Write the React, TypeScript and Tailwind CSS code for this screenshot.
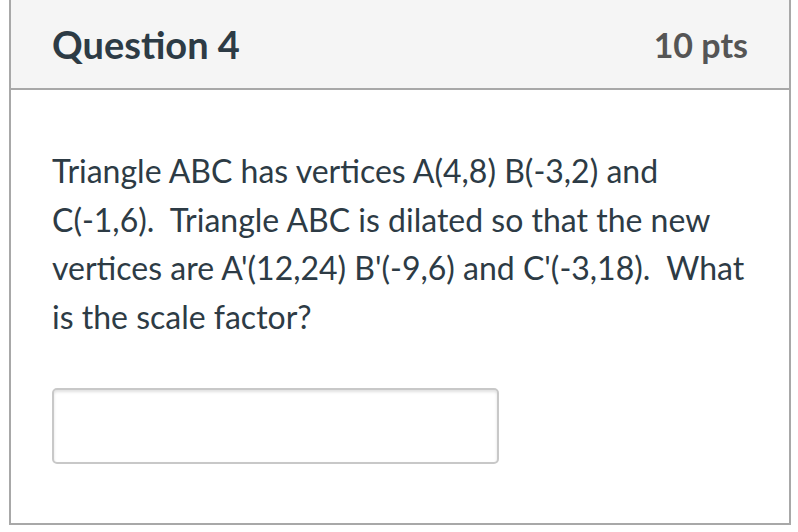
import React from "react";

export default function App() {
  return (
    <div className="w-[798px] h-[532px] bg-white relative overflow-hidden" style={{ fontFamily: "Lato, 'Noto Sans', sans-serif" }}>
      <div className="absolute left-[9px] top-[-4px] w-[782px] h-[529px] border-2 border-[#a8a8a8] flex flex-col">
        <div className="h-[92px] bg-[#f5f5f5] border-b-2 border-[#a8a8a8] flex items-center justify-between pl-[41px] pr-[41px] pt-[2px]">
          <div className="text-[38px] font-bold text-[#2d3b45]">Question 4</div>
          <div className="text-[34px] font-bold text-[#555555]">10 pts</div>
        </div>
        <div className="flex-1 bg-white pl-[41px] pt-[57px]">
          <p className="text-[32px] leading-[48.5px] text-[#2d3b45] whitespace-pre">
            {"Triangle ABC has vertices A(4,8) B(-3,2) and\nC(-1,6).  Triangle ABC is dilated so that the new\nvertices are A'(12,24) B'(-9,6) and C'(-3,18).  What\nis the scale factor?"}
          </p>
          <div className="mt-[47px] w-[447px] h-[76px] rounded-[5px] border-2 border-[#c8c8c8] shadow-[inset_0_2px_3px_rgba(0,0,0,0.12)] bg-white"></div>
        </div>
      </div>
    </div>
  );
}
